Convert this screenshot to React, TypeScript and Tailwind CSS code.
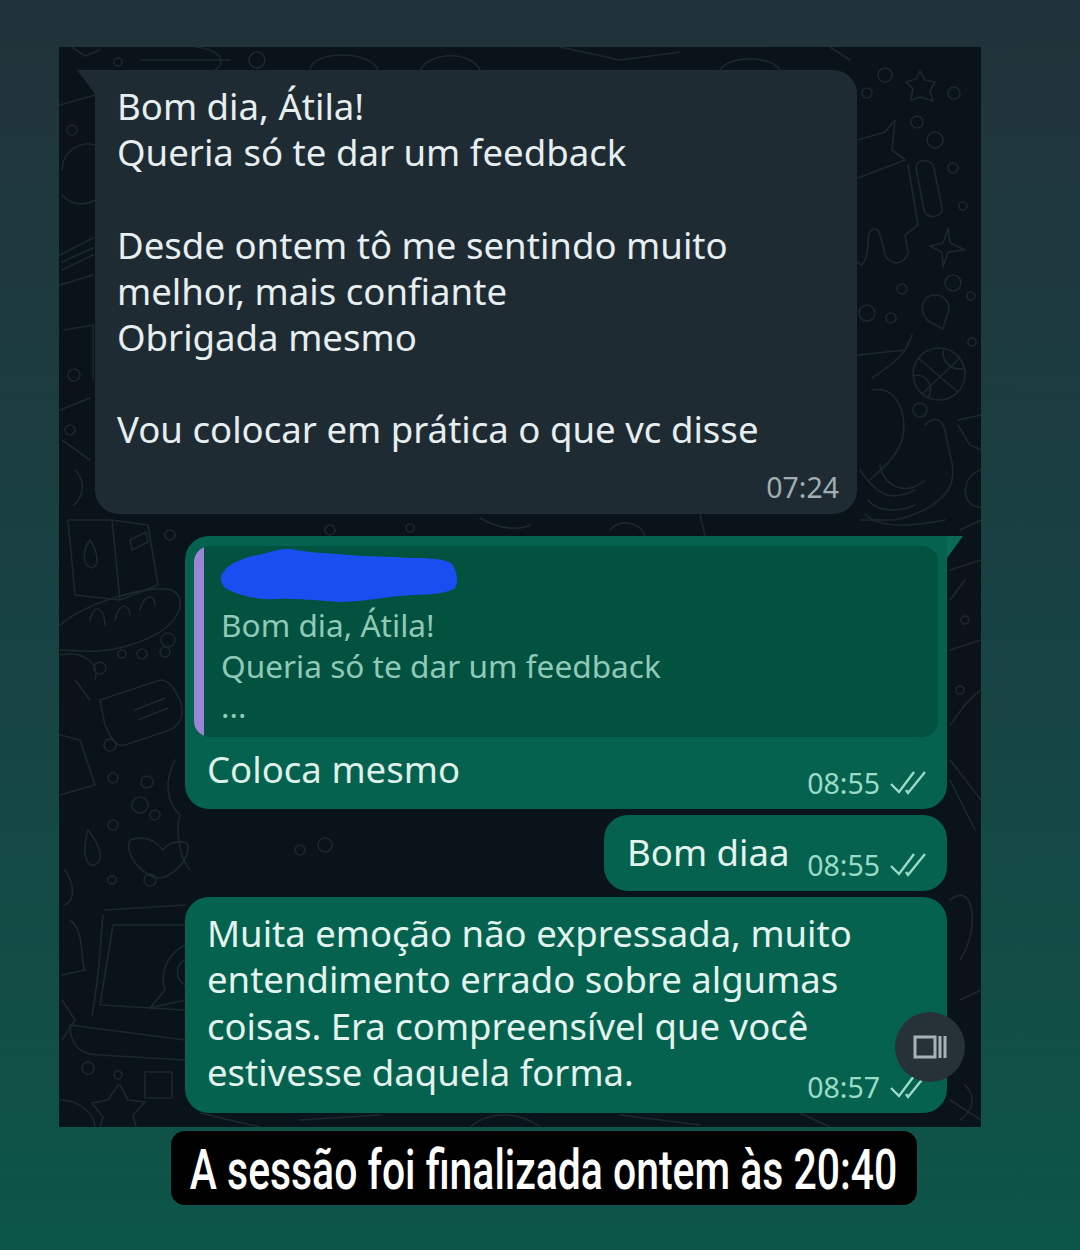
const circles: [number, number, number][] = [
  [885, 75, 7], [867, 93, 5], [954, 93, 6], [917, 122, 6], [935, 140, 8], [953, 168, 5], [963, 206, 4],
  [902, 289, 5], [867, 313, 8], [891, 318, 5], [953, 283, 8], [971, 296, 4], [972, 342, 4], [920, 410, 7],
  [118, 62, 4], [257, 60, 8], [72, 130, 5], [74, 375, 6], [70, 430, 5],
  [170, 535, 5], [168, 640, 7], [142, 654, 5], [122, 654, 4], [100, 668, 6], [165, 652, 5], [110, 745, 6],
  [113, 778, 5], [147, 782, 6], [140, 805, 8], [113, 825, 5], [155, 815, 5], [112, 880, 4], [150, 880, 6],
  [88, 1068, 6], [118, 1075, 4], [330, 530, 5], [410, 528, 4], [965, 620, 4], [960, 690, 4], [300, 850, 5], [325, 845, 7],
]

const doodles = [
  // star, top right
  "M920 71 L925 80 L935 82 L930 91 L933 101 L921 97 L911 100 L913 89 L906 82 L916 79 Z",
  // pill
  "M916 168 C916 158 932 158 934 168 L942 208 C943 218 926 220 924 210 Z",
  // four point star
  "M948 228 L950 243 L965 250 L948 252 L943 267 L942 252 L930 246 L943 243 Z",
  // map pin
  "M935 295 C948 295 952 308 946 318 L943 329 L930 322 C918 315 920 295 935 295 Z",
  // basketball
  "M939 348 A26 26 0 1 0 939.1 400 A26 26 0 1 0 939 348 M918 358 L958 392 M960 358 L922 394 M913 376 C925 372 935 385 928 398 M944 349 C940 360 952 372 964 368",
  // animal, right side
  "M858 140 L885 132 L895 120 L892 150 L905 160 L858 178 M908 165 L918 225 L905 235 L908 252 C905 268 885 265 884 250 L880 235 C878 225 868 228 868 240 C868 265 860 268 858 262",
  // moon shape
  "M858 355 L905 350 L912 335 C905 358 890 365 872 378 M872 390 C900 385 908 420 902 440 C895 460 880 470 870 480 M925 425 C935 415 942 420 945 430 C948 450 955 465 952 480 C948 500 920 515 895 520 L860 520",
  "M880 465 C885 490 910 495 925 480 M868 500 C880 515 905 510 915 505",
  "M958 420 L981 415 M958 425 L970 445 L981 450 M981 470 C965 475 960 495 972 505 L981 508",
  // left strip
  "M60 105 L95 95 M62 170 A26 26 0 0 1 95 145 M62 195 A26 26 0 0 0 95 200 M60 255 L93 238 M62 262 L93 248 M62 270 L93 255 M60 285 L93 275",
  "M64 330 L93 325 L93 380 M60 410 L90 398 M62 440 L90 460 M75 470 C85 480 85 495 74 505",
  // top strip
  "M72 47 L85 56 L100 50 M140 60 L230 60 M195 47 C225 50 225 65 215 70 M310 70 C312 50 370 50 378 70 M420 70 C430 52 470 50 480 70",
  "M560 47 L620 60 L680 52 M720 70 C730 55 770 55 780 70 M830 47 L850 60",
  // under first bubble
  "M865 514 C880 530 920 525 945 520 M960 530 L981 520 M860 470 C880 500 895 500 915 490",
  "M700 514 L705 536 M610 530 C620 518 640 522 645 536 M480 518 C500 530 520 530 530 525",
  // carton
  "M68 520 L112 520 L148 525 L158 585 L120 600 L75 595 Z M112 520 L120 600 M90 540 C98 552 100 565 92 568 C82 566 82 550 90 540 M130 540 L146 532 L148 542 L132 550 Z",
  // bread
  "M60 625 C90 600 150 585 172 590 C190 600 180 630 130 645 C100 655 75 650 60 650 M90 620 C95 600 105 610 105 625 M115 620 C120 600 130 605 130 615 M140 610 C145 592 155 595 155 605",
  // note bubble
  "M100 700 L160 680 C170 680 175 690 180 700 C185 715 180 725 170 730 L125 745 C115 748 110 735 105 725 Z M135 710 L165 698 M138 720 L168 708",
  // left side objects
  "M60 655 C85 650 100 665 95 680 M75 680 L90 700 M60 735 L80 740 L95 785 L60 795",
  "M175 760 C165 780 165 800 180 815 C175 830 180 860 190 870",
  // drops and heart
  "M88 830 C100 845 105 860 95 865 C85 868 82 850 88 830 M65 870 C75 885 75 900 65 905",
  "M130 840 C145 835 155 840 163 850 C170 840 185 840 188 845 C190 860 170 880 155 878 C135 870 125 850 130 840 Z",
  // laptop
  "M105 910 L185 905 M103 915 C102 920 100 975 92 1015 M113 925 L185 925 M113 925 L100 1005 L185 1010 M70 1025 L185 1040 M70 1025 C70 1045 80 1055 100 1055 L185 1060",
  "M185 945 C165 955 160 975 165 990 L150 1008 L185 1000 M185 960 C175 965 175 980 185 985",
  // small bits left bottom
  "M70 920 C85 930 80 960 85 970 L62 975 M62 1000 L75 1020 L62 1040",
  "M120 1085 L128 1100 L145 1102 L133 1115 L136 1127 M118 1085 L108 1100 L92 1103 L103 1117 L100 1127",
  "M145 1072 L172 1072 L172 1098 L145 1098 Z M60 1100 C80 1100 95 1115 95 1127",
  // right of green bubbles
  "M950 570 L981 560 M950 600 L965 580 M950 650 L981 640 M981 690 C965 700 955 720 950 725 M950 760 L981 800 M950 780 L975 830 M950 900 C975 880 980 930 960 960 M960 1000 L981 990",
  "M965 1085 C975 1095 975 1110 960 1120 M950 1100 L981 1120",
  // bottom strip
  "M200 1113 L260 1127 M300 1120 L380 1115 M470 1127 C490 1110 520 1112 540 1127 M620 1115 L700 1125 M800 1113 L830 1127",
]

function Doodles() {
  return (
    <svg
      className="absolute inset-0 w-full h-full"
      viewBox="59 47 922 1080"
      fill="none"
      stroke="#1c282d"
      strokeWidth="1.6"
      strokeLinecap="round"
      strokeLinejoin="round"
    >
      {doodles.map((d, i) => (
        <path key={i} d={d} />
      ))}
      {circles.map(([cx, cy, r], i) => (
        <circle key={i} cx={cx} cy={cy} r={r} />
      ))}
    </svg>
  )
}

function Checks() {
  return (
    <svg width="38" height="26" viewBox="0 0 38 26" fill="none" stroke="#9adbc8" strokeWidth="2.4">
      <path d="M2 14 L10 22 L25 2" />
      <path d="M17 20 L19 23 L36 2" />
    </svg>
  )
}

function Stamp({ time }: { time: string }) {
  return (
    <div className="flex items-center gap-[9px] text-[28.5px] leading-[36px] text-[#9adbc8]">
      <span>{time}</span>
      <Checks />
    </div>
  )
}

export default function App() {
  return (
    <div className="w-[1080px] h-[1250px] overflow-hidden bg-gradient-to-b from-[#203239] via-[#174243] to-[#0b5648] pt-[47px] pl-[59px] font-['Noto_Sans',sans-serif]">
      {/* Chat panel */}
      <div className="relative w-[922px] h-[1080px] bg-[#0a1319] flex flex-col items-start pt-[23px]">
        <Doodles />

        {/* Incoming message */}
        <div className="relative ml-[36px] w-[762px] h-[444px] rounded-[24px] rounded-tl-none bg-[#1f2b33] pt-[13px] pl-[22px] pr-[18px] text-[36.6px] leading-[46.2px] text-[#e6eef0]">
          <div className="absolute top-0 left-[-18px] w-[18px] h-[24px] bg-[#1f2b33] [clip-path:polygon(0_0,100%_0,100%_100%)]" />
          <p>Bom dia, Átila!</p>
          <p>Queria só te dar um feedback</p>
          <p className="mt-[46.2px]">Desde ontem tô me sentindo muito</p>
          <p>melhor, mais confiante</p>
          <p>Obrigada mesmo</p>
          <p className="mt-[46.2px]">Vou colocar em prática o que vc disse</p>
          <div className="mt-[16px] flex justify-end text-[28.5px] leading-[36px] text-[#a0adb2]">07:24</div>
        </div>

        {/* Reply with quote */}
        <div className="relative self-end mr-[34px] mt-[22px] w-[762px] h-[273px] rounded-[24px] rounded-tr-none bg-[#05624e] pt-[10px] px-[9px]">
          <div className="absolute top-0 right-[-16px] w-[16px] h-[22px] bg-[#0a6a56] [clip-path:polygon(0_0,100%_0,0_100%)]" />
          <div className="relative h-[191px] rounded-[16px] overflow-hidden bg-[#03513f] pl-[27px] pt-[59px] text-[31.6px] leading-[40.5px] text-[#8fc9b8]">
            <div className="absolute left-0 top-0 bottom-0 w-[10px] bg-[#9a86d4]" />
            <p>Bom dia, Átila!</p>
            <p>Queria só te dar um feedback</p>
            <p>...</p>
          </div>
          {/* Scribbled-out name */}
          <svg className="absolute left-[34px] top-[10px]" width="242" height="62" viewBox="0 0 242 62">
            <path
              d="M2 30 C6 20 18 14 34 10 C48 8 56 2 72 3 C90 7 110 7 130 9 C150 11 170 10 190 12 C205 12 222 12 232 17 C238 24 240 36 236 42 C225 50 200 48 180 50 C160 52 140 56 120 56 C100 55 80 52 60 53 C40 54 20 50 6 42 C3 38 1 34 2 30 Z"
              fill="#1a4ef0"
            />
          </svg>
          <div className="flex justify-between pt-[9px] pl-[13px] pr-[11px]">
            <span className="text-[36.6px] leading-[46.2px] text-[#dff0ea]">Coloca mesmo</span>
            <div className="pt-[19px]">
              <Stamp time="08:55" />
            </div>
          </div>
        </div>

        <div className="relative self-end mr-[34px] mt-[6px] w-[343px] h-[76px] rounded-[24px] bg-[#05624e] flex justify-between pt-[14px] pl-[23px] pr-[20px] text-[36.6px] leading-[46.2px] text-[#e3f3ee]">
          <span>Bom diaa</span>
          <div className="pt-[18px]">
            <Stamp time="08:55" />
          </div>
        </div>

        <div className="relative self-end mr-[34px] mt-[6px] w-[762px] h-[216px] rounded-[24px] bg-[#05624e] pt-[13px] pl-[22px] text-[36.5px] leading-[46.3px] text-[#e3f3ee]">
          <p>Muita emoção não expressada, muito</p>
          <p>entendimento errado sobre algumas</p>
          <p>coisas. Era compreensível que você</p>
          <p>estivesse daquela forma.</p>
          <div className="absolute right-[20px] bottom-[8px]">
            <Stamp time="08:57" />
          </div>
        </div>

        {/* Floating button */}
        <div className="absolute left-[836px] top-[965px] w-[70px] h-[70px] rounded-full bg-[#263238] flex items-center justify-center">
          <svg width="34" height="26" viewBox="0 0 34 26" fill="none" stroke="#a6b2b6" strokeWidth="3">
            <rect x="2" y="3" width="20" height="20" />
            <path d="M27 2 V24 M32 2 V24" />
          </svg>
        </div>
      </div>

      {/* Caption */}
      <div className="ml-[112px] mt-[4px] w-[746px] h-[74px] rounded-[14px] bg-black flex items-center justify-center overflow-hidden pt-[3px]">
        <span className="whitespace-nowrap scale-x-[0.73] font-['Roboto',sans-serif] font-medium text-[56px] leading-[66px] text-white">
          A sessão foi finalizada ontem às 20:40
        </span>
      </div>
    </div>
  )
}
